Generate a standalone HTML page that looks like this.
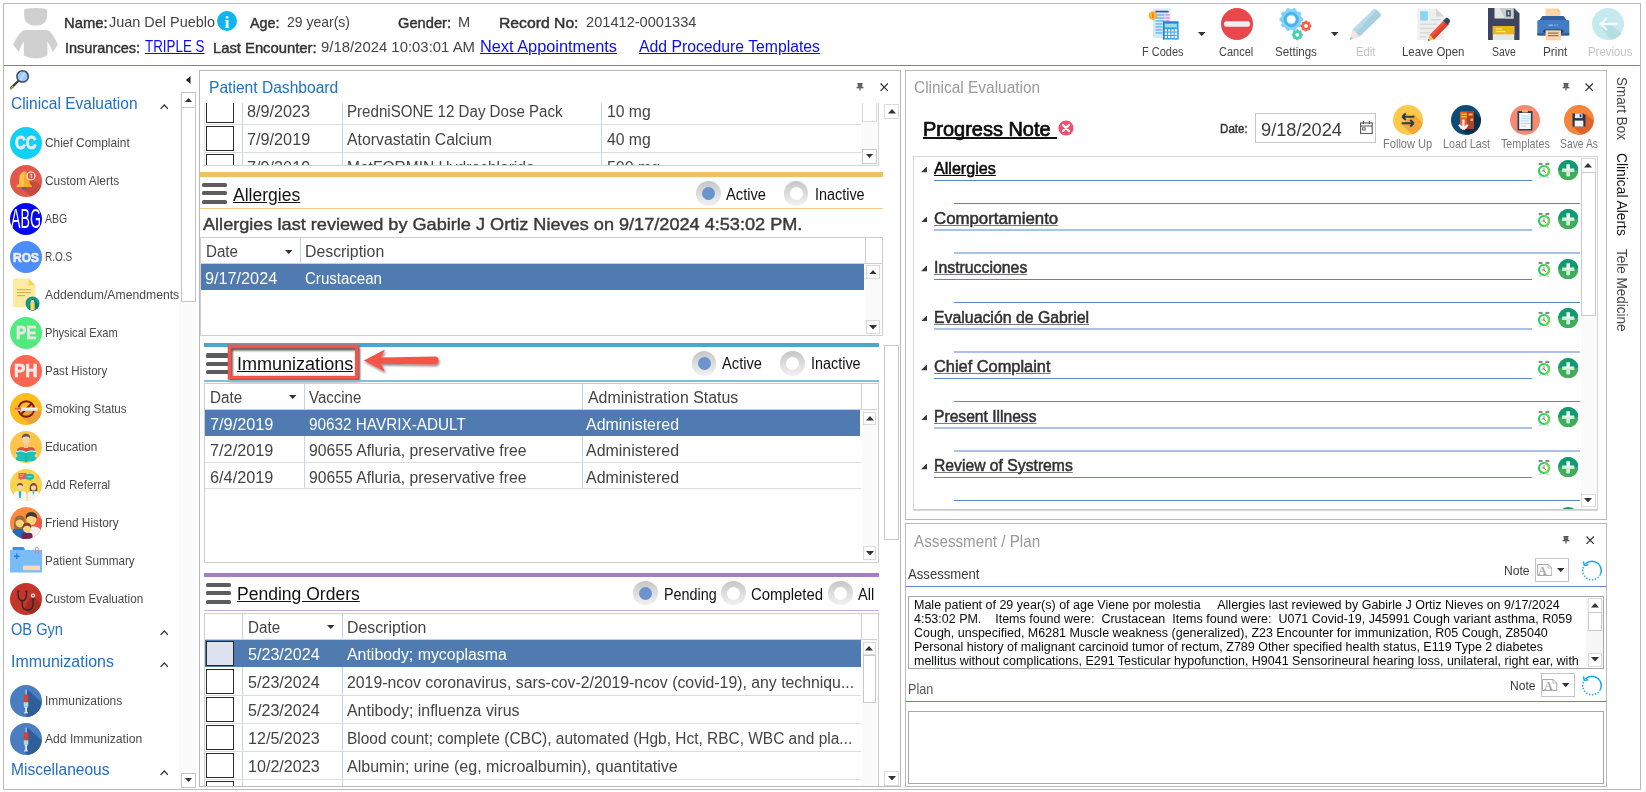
<!DOCTYPE html><html><head><meta charset="utf-8"><title>EHR</title><style>
html,body{margin:0;padding:0;background:#fff;}
body{width:1646px;height:792px;overflow:hidden;font-family:"Liberation Sans",sans-serif;}
#app{position:relative;width:1646px;height:792px;overflow:hidden;}
#app div,#app span.t,#app svg{position:absolute;}
span.t{white-space:pre;transform-origin:0 50%;display:block;}

</style></head><body><div id="app">
<div style="left:3px;top:3px;width:1636px;height:785px;border:1px solid #b9b9b9"></div>
<div style="left:4px;top:65px;width:1636px;height:1px;background:#5d8ac6"></div>
<svg style="left:12px;top:7px;" width="48" height="53" viewBox="12 7 48 53"><path d="M24.1 10.5Q24.1 8.7 27 8.4Q35.6 7.6 44.3 8.4Q47.2 8.7 47.2 10.5V14.5Q47.2 25.6 35.65 25.6Q24.1 25.6 24.1 14.5Z" fill="#d0d0d0"/><path d="M26 29.9H45.3Q49.5 29.9 52 34Q56 39.5 57.9 44.5L52.8 51.9Q50.5 45.5 47.4 41.5V55.5Q41 58.6 35.65 58.6Q30 58.6 23.8 55.5V41.5Q20.8 45.5 18.8 51.9L13.1 44.5Q15 39.5 19.3 34Q22 29.9 26 29.9Z" fill="#d0d0d0"/></svg>
<span class="t" style="left:63.5px;top:15.00px;font-size:15px;line-height:15px;color:#333;transform:scaleX(0.9844);-webkit-text-stroke:0.45px #333;">Name:</span>
<span class="t" style="left:108.5px;top:14.00px;font-size:15px;line-height:15px;color:#444;transform:scaleX(0.9630);">Juan Del Pueblo</span>
<div style="left:217px;top:11px;width:20px;height:20px;border-radius:50%;background:#12b4f0"></div>
<span class="t" style="left:224.6px;top:14.00px;font-size:17px;line-height:17px;color:#fff;font-weight:700;font-family:'Liberation Serif',sans-serif;">i</span>
<span class="t" style="left:249.5px;top:15.00px;font-size:15px;line-height:15px;color:#333;transform:scaleX(0.9559);-webkit-text-stroke:0.45px #333;">Age:</span>
<span class="t" style="left:287px;top:14.00px;font-size:15px;line-height:15px;color:#444;transform:scaleX(0.9329);">29 year(s)</span>
<span class="t" style="left:397.5px;top:15.00px;font-size:15px;line-height:15px;color:#333;transform:scaleX(0.9778);-webkit-text-stroke:0.45px #333;">Gender:</span>
<span class="t" style="left:458.3px;top:14.00px;font-size:15px;line-height:15px;color:#444;transform:scaleX(0.9760);">M</span>
<span class="t" style="left:498.5px;top:15.00px;font-size:15px;line-height:15px;color:#333;transform:scaleX(1.0478);-webkit-text-stroke:0.45px #333;">Record No:</span>
<span class="t" style="left:585.5px;top:14.00px;font-size:15px;line-height:15px;color:#444;transform:scaleX(0.9740);">201412-0001334</span>
<span class="t" style="left:65px;top:40.00px;font-size:15px;line-height:15px;color:#333;transform:scaleX(0.9672);-webkit-text-stroke:0.45px #333;">Insurances:</span>
<span class="t" style="left:144.5px;top:39.00px;font-size:16px;line-height:16px;color:#0a0aff;text-decoration:underline;transform:scaleX(0.8364);">TRIPLE S</span>
<span class="t" style="left:212.5px;top:40.00px;font-size:15px;line-height:15px;color:#333;transform:scaleX(0.9850);-webkit-text-stroke:0.45px #333;">Last Encounter:</span>
<span class="t" style="left:320.5px;top:39.00px;font-size:15px;line-height:15px;color:#444;transform:scaleX(0.9926);">9/18/2024 10:03:01 AM</span>
<span class="t" style="left:479.5px;top:39.00px;font-size:16px;line-height:16px;color:#0a0aff;text-decoration:underline;transform:scaleX(1.0201);">Next Appointments</span>
<span class="t" style="left:639px;top:39.00px;font-size:16px;line-height:16px;color:#0a0aff;text-decoration:underline;transform:scaleX(0.9847);">Add Procedure Templates</span>
<span class="t" style="left:1142.3px;top:46.00px;font-size:12px;line-height:12px;color:#444;transform:scaleX(0.9149);">F Codes</span>
<span class="t" style="left:1219px;top:46.00px;font-size:12px;line-height:12px;color:#444;transform:scaleX(0.9181);">Cancel</span>
<span class="t" style="left:1274.6px;top:46.00px;font-size:12px;line-height:12px;color:#444;transform:scaleX(0.9663);">Settings</span>
<span class="t" style="left:1355.5px;top:46.00px;font-size:12px;line-height:12px;color:#c4c4c4;transform:scaleX(0.9426);">Edit</span>
<span class="t" style="left:1402.2px;top:46.00px;font-size:12px;line-height:12px;color:#444;transform:scaleX(0.9543);">Leave Open</span>
<span class="t" style="left:1491.6px;top:46.00px;font-size:12px;line-height:12px;color:#444;transform:scaleX(0.8699);">Save</span>
<span class="t" style="left:1542.8px;top:46.00px;font-size:12px;line-height:12px;color:#444;transform:scaleX(0.9803);">Print</span>
<span class="t" style="left:1587.6px;top:46.00px;font-size:12px;line-height:12px;color:#c4c4c4;transform:scaleX(0.9510);">Previous</span>
<svg style="left:1197.55px;top:31.9px;" width="7.5" height="4.2" viewBox="0 0 7.5 4.2"><path d="M0 0H7.5L3.75 4.2Z" fill="#333"/></svg>
<svg style="left:1330.55px;top:31.9px;" width="7.5" height="4.2" viewBox="0 0 7.5 4.2"><path d="M0 0H7.5L3.75 4.2Z" fill="#333"/></svg>
<svg style="left:1148px;top:8px;" width="31" height="32" viewBox="0 0 31 32">
<path d="M5 0.5H22.5V30H7.5Q5 30 5 28Z" fill="#d6e8fb"/>
<rect x="7.5" y="2.8" width="13" height="1.6" fill="#33518f"/>
<g fill="#7ec0f5"><rect x="7.5" y="6" width="9" height="1.8"/><rect x="7.5" y="9" width="9" height="1.8"/><rect x="7.5" y="12" width="9" height="1.8"/><rect x="7.5" y="15" width="7" height="1.8"/><rect x="7.5" y="18" width="7" height="1.8"/><rect x="7.5" y="21" width="7" height="1.8"/><rect x="7.5" y="24" width="7" height="1.8"/></g>
<g fill="#f49ac0"><rect x="17.5" y="6" width="4" height="1.8"/><rect x="17.5" y="9" width="4" height="1.8"/><rect x="17.5" y="12" width="4" height="1.8"/></g>
<circle cx="5" cy="7.5" r="4.3" fill="#f7a823"/><circle cx="5" cy="7.5" r="3" fill="#fbbd3a"/><path d="M5.9 6.2Q4.2 5.6 4.2 6.9Q4.3 7.6 5.2 7.7Q6 7.9 5.9 8.6Q5.6 9.4 4.1 8.8M5 5.3V9.8" stroke="#e8641e" stroke-width=".7" fill="none"/>
<rect x="15" y="13.5" width="15.5" height="18" fill="#2b9cf0"/><rect x="15" y="13.5" width="1.3" height="18" fill="#1f82d6"/><rect x="15" y="13.5" width="15.5" height="1.4" fill="#1f82d6"/><rect x="26.2" y="20.5" width="4.3" height="11" fill="#45aaf5"/>
<rect x="16.8" y="15.8" width="12" height="3.6" fill="#9adfe0"/>
<g fill="#fff"><rect x="16.8" y="21.3" width="2.3" height="2.2"/><rect x="20.1" y="21.3" width="2.3" height="2.2"/><rect x="23.4" y="21.3" width="2.3" height="2.2"/><rect x="26.7" y="21.3" width="2.3" height="2.2"/>
<rect x="16.8" y="24.6" width="2.3" height="2.2"/><rect x="20.1" y="24.6" width="2.3" height="2.2"/><rect x="23.4" y="24.6" width="2.3" height="2.2"/><rect x="26.7" y="24.6" width="2.3" height="2.2"/>
<rect x="16.8" y="27.9" width="2.3" height="2.2"/><rect x="20.1" y="27.9" width="2.3" height="2.2"/><rect x="23.4" y="27.9" width="2.3" height="2.2"/><rect x="26.7" y="27.9" width="2.3" height="2.2"/></g>
</svg>
<svg style="left:1220.5px;top:8px;" width="32" height="32" viewBox="0 0 32 32"><circle cx="16" cy="16" r="16" fill="#e8474c"/><rect x="3" y="13.3" width="26" height="5.4" rx="2.5" fill="#f0f0f0"/></svg>
<svg style="left:1279px;top:8px;" width="33" height="33" viewBox="0 0 33 33"><path d="M23.44 10.37L23.44 12.63L21.68 13.56L21.08 15.41L21.96 17.19L20.63 19.03L18.66 18.74L17.09 19.88L16.75 21.84L14.60 22.54L13.17 21.15L11.23 21.15L9.80 22.54L7.65 21.84L7.31 19.88L5.74 18.74L3.77 19.03L2.44 17.19L3.32 15.41L2.72 13.56L0.96 12.63L0.96 10.37L2.72 9.44L3.32 7.59L2.44 5.81L3.77 3.97L5.74 4.26L7.31 3.12L7.65 1.16L9.80 0.46L11.23 1.85L13.17 1.85L14.60 0.46L16.75 1.16L17.09 3.12L18.66 4.26L20.63 3.97L21.96 5.81L21.08 7.59L21.68 9.44Z" fill="#7fd3fb" stroke="#7fd3fb" stroke-width="1" stroke-linejoin="round"/><circle cx="12.2" cy="11.5" r="4.1" fill="#fff"/><circle cx="12.2" cy="11.5" r="6.2" fill="none" stroke="#49b1ea" stroke-width="2.4"/><path d="M32.06 17.36L32.06 18.64L31.05 19.11L30.65 20.08L31.03 21.13L30.13 22.03L29.08 21.65L28.11 22.05L27.64 23.06L26.36 23.06L25.89 22.05L24.92 21.65L23.87 22.03L22.97 21.13L23.35 20.08L22.95 19.11L21.94 18.64L21.94 17.36L22.95 16.89L23.35 15.92L22.97 14.87L23.87 13.97L24.92 14.35L25.89 13.95L26.36 12.94L27.64 12.94L28.11 13.95L29.08 14.35L30.13 13.97L31.03 14.87L30.65 15.92L31.05 16.89Z" fill="#f8604e" stroke="#f8604e" stroke-width="1" stroke-linejoin="round"/><circle cx="27" cy="18" r="1.9" fill="#fff"/><path d="M23.36 26.16L23.36 27.44L22.35 27.91L21.95 28.88L22.33 29.93L21.43 30.83L20.38 30.45L19.41 30.85L18.94 31.86L17.66 31.86L17.19 30.85L16.22 30.45L15.17 30.83L14.27 29.93L14.65 28.88L14.25 27.91L13.24 27.44L13.24 26.16L14.25 25.69L14.65 24.72L14.27 23.67L15.17 22.77L16.22 23.15L17.19 22.75L17.66 21.74L18.94 21.74L19.41 22.75L20.38 23.15L21.43 22.77L22.33 23.67L21.95 24.72L22.35 25.69Z" fill="#45d0b0" stroke="#45d0b0" stroke-width="1" stroke-linejoin="round"/><circle cx="18.3" cy="26.8" r="1.9" fill="#fff"/></svg>
<svg style="left:1349px;top:8px;" width="33" height="33" viewBox="0 0 33 33">
<path d="M3.5 21.5L24 1.8Q25.8 0.2 27.6 1.8L31.2 5.4Q32.6 7 31 8.8L10.5 28.5Z" fill="#b9dcea"/>
<path d="M7 25L27.6 1.8L31.2 5.4Q32.6 7 31 8.8L10.5 28.5Z" fill="#a9d0e0"/>
<path d="M3.5 21.5L10.5 28.5L0.8 32Z" fill="#f3e4df"/><path d="M0.8 32L3.9 30.8L1.9 28.9Z" fill="#86c6de"/></svg>
<svg style="left:1417px;top:8px;" width="33" height="33" viewBox="0 0 33 33">
<path d="M0.5 0.5H19L27 8.5V32H0.5Z" fill="#efefef"/><path d="M19 0.5V8.5H27Z" fill="#d4d8de"/>
<rect x="3.2" y="3.2" width="7.6" height="9.3" fill="#86d6fb"/>
<g fill="#d5dae2"><rect x="14" y="11" width="10" height="1.6"/><rect x="3.2" y="15.4" width="17" height="1.6"/><rect x="3.2" y="19.6" width="14" height="1.6"/><rect x="3.2" y="23.8" width="10" height="1.6"/><rect x="3.2" y="28" width="6" height="1.6"/></g>
<path d="M12.5 27L27.5 11.5L32 16L17 31.5Z" fill="#f0533c"/><path d="M14.7 29.2L29.7 13.7L32 16L17 31.5Z" fill="#d9432f"/>
<path d="M26.2 12.8L29 10Q30 9 31 10L33 12.2Q33.8 13.2 32.8 14.2L30.5 17Z" fill="#2f4a5e"/>
<path d="M12.5 27L17 31.5L11 32.8Z" fill="#f6c243"/><path d="M11 32.8L12.9 32.4L11.5 31Z" fill="#333"/></svg>
<svg style="left:1488px;top:8px;" width="31.5" height="32" viewBox="0 0 31.5 32">
<path d="M0 0H26L31.5 5.5V32H0Z" fill="#3d4460"/>
<path d="M6.5 0H25.5V10.5H6.5Z" fill="#e3e7e7"/><path d="M11.5 0H25.5V10.5H17Z" fill="#c7cccc"/>
<rect x="18.2" y="2.2" width="4.6" height="6.3" fill="#3d4460"/><rect x="19.7" y="3.6" width="1.6" height="3.5" fill="#c7cccc"/>
<rect x="4.8" y="18" width="21.5" height="14" fill="#e4e7e7"/><rect x="4.8" y="18" width="21.5" height="8.3" fill="#e9b616"/>
<g fill="#fbe6a0"><rect x="7.8" y="20.3" width="6" height="1.3"/><rect x="7.8" y="22.9" width="9.5" height="1.3"/></g></svg>
<svg style="left:1537px;top:8px;" width="32.5" height="32.5" viewBox="0 0 32.5 32.5">
<path d="M8.5 0.5H20.5L23.5 3.5V11H8.5Z" fill="#fbd5a9"/><path d="M20.5 0.5V3.5H23.5Z" fill="#e8b684"/>
<path d="M5.5 8H26.5L29.5 12H2.5Z" fill="#2f5f9e"/>
<rect x="0.3" y="12" width="32" height="15.5" rx="1.5" fill="#437cc2"/><rect x="0.3" y="25" width="32" height="2.5" fill="#2f5f9e"/>
<g fill="#9fc4ee"><rect x="11.5" y="16.6" width="4.5" height="1.2"/><rect x="17.2" y="16.6" width="1.2" height="1.2"/><rect x="19.6" y="16.6" width="1.2" height="1.2"/></g>
<rect x="6.3" y="21.5" width="20" height="3.6" rx="1.8" fill="#23395b"/>
<rect x="8.5" y="22.3" width="15.5" height="10" fill="#fbd5a9"/>
<g fill="#7a5b3e"><rect x="11" y="24.6" width="10.5" height="1"/><rect x="11" y="27.2" width="10.5" height="1"/></g></svg>
<svg style="left:1592px;top:8px;" width="32" height="32" viewBox="0 0 32 32">
<circle cx="16" cy="16" r="16" fill="#c5e9ed"/>
<path d="M13 12L29.5 25.5A16 16 0 0 1 19 31.7L9 19.8Z" fill="#b6dde2"/>
<path d="M7 16L14 9.3L15.7 11L11.8 14.8H25.5V17.2H11.8L15.7 21L14 22.7Z" fill="#f1fafb"/></svg>
<svg style="left:8.5px;top:68.7px;" width="21" height="21" viewBox="0 0 21 21">
<path d="M2 19.2L9.2 12" stroke="#3d3d3d" stroke-width="2.4" stroke-linecap="round"/><path d="M1.6 19.6L3.6 17.6" stroke="#8aa04a" stroke-width="1.6" stroke-linecap="round"/>
<circle cx="13.6" cy="7.4" r="5.7" fill="#9ccafc" stroke="#3b4a5e" stroke-width="1.5"/>
<path d="M11.5 10.8L15.6 4" stroke="#cfe4fd" stroke-width="1.6"/></svg>
<svg style="left:186.3px;top:75.8px;" width="4.5" height="8" viewBox="0 0 4.5 8"><path d="M4.5 0V8L0 4Z" fill="#222"/></svg>
<span class="t" style="left:10.5px;top:96.00px;font-size:16px;line-height:16px;color:#2070c4;transform:scaleX(0.9676);">Clinical Evaluation</span>
<svg style="left:159.8px;top:103.5px;" width="8.6" height="5.4" viewBox="0 0 8.6 5.4"><path d="M0.6 4.9L4.3 1L8 4.9" stroke="#333" stroke-width="1.25" fill="none"/></svg>
<div style="left:178.5px;top:92px;width:17.5px;height:696px;background:#fbfbfb"></div>
<div style="left:181px;top:92.3px;width:12.6px;height:207.7px;border:1px solid #c4c4c4;background:#fff"></div>
<div style="left:181px;top:106.6px;width:14.6px;height:1px;background:#c9c9c9"></div>
<svg style="left:184.8px;top:98.0px;" width="7" height="4" viewBox="0 0 7 4"><path d="M0 4H7L3.5 0Z" fill="#333"/></svg>
<div style="left:181px;top:772.5px;width:12.6px;height:13.5px;border:1px solid #c4c4c4;background:#fff"></div>
<svg style="left:184.8px;top:778.0px;" width="7" height="4" viewBox="0 0 7 4"><path d="M0 0H7L3.5 4Z" fill="#333"/></svg>
<span class="t" style="left:45.3px;top:136.00px;font-size:13px;line-height:13px;color:#4a4a4a;transform:scaleX(0.9157);">Chief Complaint</span>
<span class="t" style="left:45.3px;top:174.00px;font-size:13px;line-height:13px;color:#4a4a4a;transform:scaleX(0.9169);">Custom Alerts</span>
<span class="t" style="left:45.3px;top:212.00px;font-size:13px;line-height:13px;color:#4a4a4a;transform:scaleX(0.8082);">ABG</span>
<span class="t" style="left:45.3px;top:250.00px;font-size:13px;line-height:13px;color:#4a4a4a;transform:scaleX(0.7682);">R.O.S</span>
<span class="t" style="left:45.3px;top:288.00px;font-size:13px;line-height:13px;color:#4a4a4a;transform:scaleX(0.9378);">Addendum/Amendments</span>
<span class="t" style="left:45.3px;top:326.00px;font-size:13px;line-height:13px;color:#4a4a4a;transform:scaleX(0.8528);">Physical Exam</span>
<span class="t" style="left:45.3px;top:364.00px;font-size:13px;line-height:13px;color:#4a4a4a;transform:scaleX(0.8876);">Past History</span>
<span class="t" style="left:45.3px;top:402.00px;font-size:13px;line-height:13px;color:#4a4a4a;transform:scaleX(0.8973);">Smoking Status</span>
<span class="t" style="left:45.3px;top:440.00px;font-size:13px;line-height:13px;color:#4a4a4a;transform:scaleX(0.9027);">Education</span>
<span class="t" style="left:45.3px;top:478.00px;font-size:13px;line-height:13px;color:#4a4a4a;transform:scaleX(0.8933);">Add Referral</span>
<span class="t" style="left:45.3px;top:516.00px;font-size:13px;line-height:13px;color:#4a4a4a;transform:scaleX(0.9108);">Friend History</span>
<span class="t" style="left:45.3px;top:554.00px;font-size:13px;line-height:13px;color:#4a4a4a;transform:scaleX(0.8997);">Patient Summary</span>
<span class="t" style="left:45.3px;top:592.00px;font-size:13px;line-height:13px;color:#4a4a4a;transform:scaleX(0.8999);">Custom Evaluation</span>
<span class="t" style="left:45.3px;top:694.00px;font-size:13px;line-height:13px;color:#4a4a4a;transform:scaleX(0.9211);">Immunizations</span>
<span class="t" style="left:45.3px;top:732.00px;font-size:13px;line-height:13px;color:#4a4a4a;transform:scaleX(0.9341);">Add Immunization</span>
<span class="t" style="left:10.5px;top:622.00px;font-size:16px;line-height:16px;color:#2070c4;transform:scaleX(0.9138);">OB Gyn</span>
<svg style="left:159.8px;top:629.5px;" width="8.6" height="5.4" viewBox="0 0 8.6 5.4"><path d="M0.6 4.9L4.3 1L8 4.9" stroke="#333" stroke-width="1.25" fill="none"/></svg>
<span class="t" style="left:10.5px;top:654.00px;font-size:16px;line-height:16px;color:#2070c4;transform:scaleX(0.9985);">Immunizations</span>
<svg style="left:159.8px;top:661.5px;" width="8.6" height="5.4" viewBox="0 0 8.6 5.4"><path d="M0.6 4.9L4.3 1L8 4.9" stroke="#333" stroke-width="1.25" fill="none"/></svg>
<span class="t" style="left:10.5px;top:762.00px;font-size:16px;line-height:16px;color:#2070c4;transform:scaleX(0.9715);">Miscellaneous</span>
<svg style="left:159.8px;top:769.5px;" width="8.6" height="5.4" viewBox="0 0 8.6 5.4"><path d="M0.6 4.9L4.3 1L8 4.9" stroke="#333" stroke-width="1.25" fill="none"/></svg>
<div style="left:10px;top:126.6px;width:32px;height:32px;border-radius:50%;background:#0fd0f5"></div>
<span class="t" style="left:15.2px;top:134.00px;font-size:18.5px;line-height:18.5px;color:#e9e9e9;font-weight:700;transform:scaleX(0.8079);-webkit-text-stroke:0.9px #e9e9e9;">CC</span>
<svg style="left:10px;top:164.6px;" width="32" height="32" viewBox="0 0 32 32">
<circle cx="16" cy="16" r="16" fill="#e2574c"/>
<path d="M11 8L31.3 20.5A16 16 0 0 1 20.5 31.4L8 19Z" fill="#c94a40"/>
<path d="M14.2 6.2Q9.6 7.6 9.4 13L9 18.5L6.5 21.2V22H21.9V21.2L19.4 18.5L19 13Q18.8 7.6 14.2 6.2Z" fill="#fbc34a"/>
<path d="M14.2 6.2Q18.8 7.6 19 13L19.4 18.5L21.9 21.2V22H14.2Z" fill="#f0ad2e"/>
<path d="M11.7 22.5H16.7Q16.5 25 14.2 25Q11.9 25 11.7 22.5Z" fill="#4a6a8c"/>
<circle cx="21" cy="11" r="4" fill="#e2574c" stroke="#fdeeee" stroke-width="1.1"/><path d="M20.5 9.6L21.3 9V13" stroke="#fdeeee" stroke-width="0.9" fill="none"/></svg>
<div style="left:10px;top:202.6px;width:32px;height:32px;border-radius:50%;background:#0505f0;overflow:hidden"></div>
<span class="t" style="left:11.2px;top:206.00px;font-size:27px;line-height:27px;color:#fff;transform:scaleX(0.5260);">ABG</span>
<div style="left:10px;top:240.60000000000002px;width:32px;height:32px;border-radius:50%;background:#4d8dfa"></div>
<span class="t" style="left:13.0px;top:251.00px;font-size:13.5px;line-height:13.5px;color:#ececec;font-weight:700;transform:scaleX(0.8884);-webkit-text-stroke:0.7px #ececec;">ROS</span>
<svg style="left:12px;top:278.1px;" width="29" height="34" viewBox="0 0 29 34">
<path d="M1 0.5H16.5L23.5 7.5V29H1Z" fill="#feeaa0"/><path d="M16.5 0.5V7.5H23.5Z" fill="#f9d45c"/>
<g fill="#d9b448"><rect x="5" y="11" width="14" height="1.2"/><rect x="5" y="14" width="14" height="1.2"/><rect x="5" y="17" width="8" height="1.2"/></g>
<circle cx="20.5" cy="25.5" r="7" fill="#11998c"/><path d="M16 30.8A7 7 0 0 0 27.3 27.2L22 21Z" fill="#0c7f75"/>
<path d="M18.4 24.5H22.6V31.6Q20.5 32.6 18.4 31.6Z" fill="#fbd75a"/><path d="M18.4 24.5L20.5 20.3L22.6 24.5Z" fill="#fbe9c8"/><path d="M19.7 21.9L20.5 20.3L21.3 21.9Z" fill="#333"/></svg>
<div style="left:10px;top:316.6px;width:32px;height:32px;border-radius:50%;background:#4fec7d"></div>
<span class="t" style="left:15.75px;top:324.00px;font-size:18px;line-height:18px;color:#e6e6e6;font-weight:700;transform:scaleX(0.8536);-webkit-text-stroke:0.7px #e6e6e6;">PE</span>
<div style="left:10px;top:354.6px;width:32px;height:32px;border-radius:50%;background:#fa6650"></div>
<span class="t" style="left:14.25px;top:362.00px;font-size:18px;line-height:18px;color:#ececec;font-weight:700;transform:scaleX(0.9394);-webkit-text-stroke:0.7px #ececec;">PH</span>
<svg style="left:10px;top:392.6px;" width="32" height="32" viewBox="0 0 32 32">
<circle cx="16" cy="16" r="16" fill="#fcbe1c"/>
<path d="M11 23L22.5 12.5L31.6 19.5A16 16 0 0 1 19.3 31.6Z" fill="#e6a43a"/>
<circle cx="16.3" cy="16" r="7.8" fill="none" stroke="#8e1313" stroke-width="1.9"/>
<path d="M10.8 21.5L21.8 10.5" stroke="#8e1313" stroke-width="1.9"/>
<rect x="4.5" y="14.5" width="23" height="3.2" rx="0.6" fill="#f3f3f3"/><rect x="4.5" y="14.5" width="6.8" height="3.2" rx="0.6" fill="#e8642c"/><rect x="4.5" y="16.5" width="23" height="1.2" fill="#d9d9d9" opacity=".7"/></svg>
<svg style="left:10px;top:430.6px;" width="32" height="32" viewBox="0 0 32 32">
<defs><clipPath id="ce"><circle cx="16" cy="16" r="16"/></clipPath></defs>
<circle cx="16" cy="16" r="16" fill="#fcc44a"/>
<g clip-path="url(#ce)">
<path d="M7 19.5Q7 16.5 11 16.2L21 16.2Q25 16.5 25 19.5V26H7Z" fill="#e8493f"/>
<rect x="14" y="11.5" width="4" height="5.5" fill="#f9c495"/>
<ellipse cx="16" cy="8.3" rx="4" ry="4.7" fill="#fbd0a4"/>
<path d="M11.8 7.6Q11.6 2.8 16 2.7Q20.4 2.8 20.2 7.6Q19.3 5.3 16 5.4Q12.7 5.3 11.8 7.6Z" fill="#5b5b5b"/>
<path d="M6 20.3Q11 18 16 20.5Q21 18 26 20.3V30.8Q21 29 16 31Q11 29 6 30.8Z" fill="#1fc2b0"/>
<path d="M16 20.5V31" stroke="#15a596" stroke-width="0.8"/><path d="M6 20.3Q11 18.6 16 21Q21 18.6 26 20.3V21.2Q21 19.4 16 21.9Q11 19.4 6 21.2Z" fill="#f3f3f3"/>
<rect x="5.2" y="23.3" width="2.2" height="2.8" rx="1" fill="#fbd0a4"/><rect x="24.6" y="23.3" width="2.2" height="2.8" rx="1" fill="#fbd0a4"/></g></svg>
<svg style="left:10px;top:468.6px;" width="32" height="32" viewBox="0 0 32 32">
<defs><clipPath id="cr"><circle cx="16" cy="16" r="16"/></clipPath></defs>
<circle cx="16" cy="16" r="16" fill="#fbd24e"/>
<g clip-path="url(#cr)">
<path d="M8.5 4H16.5V10H12L10.3 11.8V10H8.5Z" fill="#f2564f"/><rect x="9.7" y="5.4" width="4.2" height="0.9" fill="#fa9c96"/><rect x="9.7" y="7.2" width="3" height="0.9" fill="#fa9c96"/>
<path d="M15 7.8Q15 4.8 19.5 4.8Q24 4.8 24 7.8Q24 10.8 20.5 10.8L21.5 12.5L18.8 10.8Q15 10.6 15 7.8Z" fill="#20b8b0"/><rect x="17.3" y="7" width="4.5" height="1.2" rx=".6" fill="#7fe0da"/>
<path d="M3.5 27Q3.5 22.5 7 22.3H13Q16.5 22.5 16.5 27V32H3.5Z" fill="#f4f6f8"/><path d="M8.7 22.3H11.3L10.8 29H9.2Z" fill="#1fb5a6"/>
<ellipse cx="10" cy="18" rx="3" ry="3.5" fill="#fbd0a4"/><path d="M6.9 17.6Q6.8 14 10 14Q13.2 14 13.1 17.6Q12.3 15.8 10 15.9Q7.7 15.8 6.9 17.6Z" fill="#6a5a4a"/>
<path d="M17.5 27Q17.5 22.8 20.5 22.5H26.5Q29.5 22.8 29.5 27V32H17.5Z" fill="#f4f6f8"/><path d="M22.4 22.5H24.6L23.5 26Z" fill="#1fb5a6"/>
<path d="M19.8 22Q19 14 23.5 14Q28 14 27.2 22Z" fill="#6b4a3a"/><ellipse cx="23.5" cy="18.3" rx="2.6" ry="3.2" fill="#fbd0a4"/><path d="M20.8 18Q20.8 14.8 23.5 14.8Q26.2 14.8 26.2 18Q25 16 23.5 16.2Q22 16 20.8 18Z" fill="#6b4a3a"/></g></svg>
<svg style="left:10px;top:506.6px;" width="32" height="32" viewBox="0 0 32 32">
<defs><clipPath id="cf"><circle cx="16" cy="16" r="16"/></clipPath></defs>
<circle cx="16" cy="16" r="16" fill="#fc8a3c"/>
<g clip-path="url(#cf)">
<path d="M20 6L32 12V26L22 32H14Z" fill="#f0594a"/>
<path d="M16 23Q16 19.5 19.5 19.5H24.5Q31 20 31.5 26V32H16Z" fill="#f1f1f1"/>
<ellipse cx="21.5" cy="12.3" rx="5" ry="5.8" fill="#fcd27a"/><path d="M15.8 12.5Q14.5 5 21.5 5Q27.5 5 27 11.5Q24 8.3 19 9.2Q17 9.5 15.8 12.5Z" fill="#3a3a3a"/>
<path d="M2.5 26Q2.5 21.5 6.5 21.3H12.5Q16 21.5 16 26V32H2.5Z" fill="#1b6fb6"/>
<path d="M4.5 22Q2.5 8.5 10 8.5Q17 8.5 15 22Z" fill="#9a6a3a"/><ellipse cx="9.8" cy="15.5" rx="4.3" ry="5" fill="#fcd27a"/><path d="M5.3 15.5Q5 10.2 10 10.2Q14.6 10.2 14.3 15.5Q12 12.4 9.8 12.6Q7 12.6 5.3 15.5Z" fill="#9a6a3a"/>
<path d="M11.5 29Q11.5 25.8 14.5 25.8H19.5Q22.5 25.8 22.5 29V32H11.5Z" fill="#7a2352"/>
<ellipse cx="17" cy="21.3" rx="3.9" ry="4.3" fill="#fcd77f"/><path d="M12.8 21.5Q12.2 15.8 17 15.8Q21.8 15.8 21.2 21.5Q20 18.7 17 18.8Q14 18.7 12.8 21.5Z" fill="#7a4526"/></g></svg>
<svg style="left:10px;top:547.1px;" width="32.5" height="26" viewBox="0 0 32.5 26">
<path d="M2.5 1Q2.5 0 3.5 0H13Q14 0 14.3 1L15 3.5H2.5Z" fill="#3f8fe0"/>
<rect x="0" y="3" width="32" height="22.5" fill="#79bcfa"/>
<path d="M4 9.2H9.5M6.75 6.5V12" stroke="#2b7fd6" stroke-width="1.5"/>
<rect x="13" y="18.6" width="17" height="4.6" fill="#fbd9b0"/>
<path d="M25.5 6.5V1.8Q25.5 0.4 26.9 0.4Q28.3 0.4 28.3 1.8V7.3" stroke="#f0707a" stroke-width="0.9" fill="none"/></svg>
<svg style="left:10px;top:582.6px;" width="32" height="32" viewBox="0 0 32 32">
<circle cx="16" cy="16" r="16" fill="#c6352b"/>
<path d="M22 11.5L31.2 21A16 16 0 0 1 21 31.2L14 26Z" fill="#a52a22"/>
<path d="M9.3 8.3H8Q7.6 17.5 12.3 18Q17 17.5 16.6 8.3H15.3" stroke="#2a2a2a" stroke-width="1.4" fill="none"/>
<path d="M12.3 18V22Q12.5 27 17.5 27Q22.8 27 23 21V14.5" stroke="#2a2a2a" stroke-width="1.4" fill="none"/>
<circle cx="23" cy="12.6" r="2.2" fill="#e9e9e9"/><circle cx="23" cy="12.6" r="0.9" fill="#c6352b"/></svg>
<svg style="left:10px;top:684.6px;" width="32" height="32" viewBox="0 0 32 32">
<circle cx="16" cy="16" r="16" fill="#4a7ec2"/>
<path d="M17.5 4.5L31.8 17.5A16 16 0 0 1 17 31.9L15 28Z" fill="#2f5e98"/>
<rect x="15.6" y="4.6" width="0.9" height="5" fill="#dfe7ef"/>
<rect x="13.8" y="9.5" width="4.5" height="8" fill="#d2452c"/>
<rect x="13.8" y="17.3" width="4.5" height="4.4" fill="#a8e0df"/>
<path d="M14.4 21.7H17.7L17.2 23H14.9Z" fill="#e9eff3"/><rect x="15.2" y="23" width="1.7" height="4.6" fill="#f2f5f7"/><rect x="14.2" y="27.3" width="3.7" height="1.1" fill="#f2f5f7"/></svg>
<svg style="left:10px;top:722.6px;" width="32" height="32" viewBox="0 0 32 32">
<circle cx="16" cy="16" r="16" fill="#4a7ec2"/>
<path d="M17.5 4.5L31.8 17.5A16 16 0 0 1 17 31.9L15 28Z" fill="#2f5e98"/>
<rect x="15.6" y="4.6" width="0.9" height="5" fill="#dfe7ef"/>
<rect x="13.8" y="9.5" width="4.5" height="8" fill="#d2452c"/>
<rect x="13.8" y="17.3" width="4.5" height="4.4" fill="#a8e0df"/>
<path d="M14.4 21.7H17.7L17.2 23H14.9Z" fill="#e9eff3"/><rect x="15.2" y="23" width="1.7" height="4.6" fill="#f2f5f7"/><rect x="14.2" y="27.3" width="3.7" height="1.1" fill="#f2f5f7"/></svg>
<div style="left:199px;top:70px;width:700.3px;height:715px;border:1px solid #b9b9b9;background:#fff"></div>
<span class="t" style="left:208.5px;top:80.00px;font-size:16px;line-height:16px;color:#2072c4;transform:scaleX(0.9749);">Patient Dashboard</span>
<svg style="left:856.3px;top:83px;" width="8" height="9" viewBox="0 0 8 9"><path d="M1.5 0.5H6.5M2.3 0.5V4.2M5.7 0.5V4.2M0.5 4.7H7.5M4 4.7V7.6" stroke="#444" stroke-width="1.1" fill="none"/><rect x="2.3" y="0.5" width="3.4" height="4" fill="#666"/></svg>
<svg style="left:880px;top:82.7px;" width="8.4" height="8.4" viewBox="0 0 8.4 8.4"><path d="M0.5 0.5L7.9 7.9M7.9 0.5L0.5 7.9" stroke="#333" stroke-width="1.2"/></svg>
<div style="left:200px;top:103px;width:680px;height:62px;overflow:hidden">
<div style="left:5px;top:21.200000000000003px;width:656px;height:1px;background:#dcdcdc"></div>
<div style="left:5.800000000000011px;top:-5.0px;width:25.8px;height:22.8px;border:1px solid #2a2a2a;background:#fff"></div>
<span class="t" style="left:47.30000000000001px;top:1.00px;font-size:16px;line-height:16px;color:#444;transform:scaleX(1.0131);">8/9/2023</span>
<span class="t" style="left:147.39999999999998px;top:1.00px;font-size:16px;line-height:16px;color:#444;transform:scaleX(0.9434);">PredniSONE 12 Day Dose Pack</span>
<span class="t" style="left:406.79999999999995px;top:1.00px;font-size:16px;line-height:16px;color:#444;transform:scaleX(0.9827);">10 mg</span>
<div style="left:5px;top:49.349999999999994px;width:656px;height:1px;background:#dcdcdc"></div>
<div style="left:5.800000000000011px;top:23.14999999999999px;width:25.8px;height:22.8px;border:1px solid #2a2a2a;background:#fff"></div>
<span class="t" style="left:47.30000000000001px;top:29.00px;font-size:16px;line-height:16px;color:#444;transform:scaleX(1.0148);">7/9/2019</span>
<span class="t" style="left:147.39999999999998px;top:29.00px;font-size:16px;line-height:16px;color:#444;transform:scaleX(0.9876);">Atorvastatin Calcium</span>
<span class="t" style="left:406.79999999999995px;top:29.00px;font-size:16px;line-height:16px;color:#444;transform:scaleX(0.9827);">40 mg</span>
<div style="left:5px;top:77.5px;width:656px;height:1px;background:#dcdcdc"></div>
<div style="left:5.800000000000011px;top:51.30000000000001px;width:25.8px;height:22.8px;border:1px solid #2a2a2a;background:#fff"></div>
<span class="t" style="left:47.30000000000001px;top:57.00px;font-size:16px;line-height:16px;color:#444;transform:scaleX(1.0148);">7/9/2019</span>
<span class="t" style="left:147.39999999999998px;top:57.00px;font-size:16px;line-height:16px;color:#444;transform:scaleX(0.9723);">MetFORMIN Hydrochloride</span>
<span class="t" style="left:406.79999999999995px;top:57.00px;font-size:16px;line-height:16px;color:#444;transform:scaleX(0.9967);">500 mg</span>
<div style="left:42px;top:0px;width:1px;height:62px;background:#c9d3e3"></div>
<div style="left:142px;top:0px;width:1px;height:62px;background:#c9d3e3"></div>
<div style="left:401px;top:0px;width:1px;height:62px;background:#c9d3e3"></div>
<div style="left:661px;top:0px;width:17px;height:62px;background:#fbfbfb"></div>
<div style="left:661.5px;top:-2px;width:13px;height:18.6px;border:1px solid #dadada;background:#fff"></div>
<div style="left:661.5px;top:45.69999999999999px;width:13px;height:13px;border:1px solid #c9c9c9;background:#fff"></div>
<svg style="left:665.5px;top:50.80000000000001px;" width="7" height="4" viewBox="0 0 7 4"><path d="M0 0H7L3.5 4Z" fill="#333"/></svg>
</div>
<div style="left:877.5px;top:103px;width:1.2px;height:62.5px;background:#d9d9d9"></div>
<div style="left:204px;top:164.6px;width:675px;height:1.3px;background:#d4d4d4"></div>
<div style="left:204.3px;top:103px;width:1px;height:62px;background:#e3e3e3"></div>
<div style="left:884.4px;top:104.3px;width:12.3px;height:12.3px;border:1px solid #dadada;background:#fff"></div>
<svg style="left:887.55px;top:109.2px;" width="8" height="4.5" viewBox="0 0 8 4.5"><path d="M0 4.5H8L4.0 0Z" fill="#333"/></svg>
<div style="left:884.4px;top:344.7px;width:12.3px;height:193px;border:1px solid #c9c9c9;background:#fff"></div>
<div style="left:884.4px;top:770.5px;width:12.3px;height:13px;border:1px solid #dadada;background:#fff"></div>
<svg style="left:887.55px;top:775.75px;" width="8" height="4.5" viewBox="0 0 8 4.5"><path d="M0 0H8L4.0 4.5Z" fill="#333"/></svg>
<div style="left:200px;top:172px;width:682.8px;height:5px;background:#efc15f"></div>
<div style="left:201.6px;top:182.8px;width:25.2px;height:4.2px;background:#5c5c5c;border-radius:1.6px"></div>
<div style="left:201.6px;top:191.20000000000002px;width:25.2px;height:4.2px;background:#5c5c5c;border-radius:1.6px"></div>
<div style="left:201.6px;top:199.60000000000002px;width:25.2px;height:4.2px;background:#5c5c5c;border-radius:1.6px"></div>
<span class="t" style="left:233.2px;top:186.00px;font-size:18px;line-height:18px;color:#111;text-decoration:underline;transform:scaleX(0.9749);">Allergies</span>
<div style="left:696.05px;top:181.05px;width:24.5px;height:24.5px;border-radius:50%;background:linear-gradient(#c6c6c6,#f2f2f2)"></div>
<div style="left:701.8px;top:186.8px;width:13px;height:13px;border-radius:50%;background:#6b93cc"></div>
<span class="t" style="left:725.8px;top:187.00px;font-size:16px;line-height:16px;color:#111;transform:scaleX(0.9179);">Active</span>
<div style="left:783.75px;top:181.05px;width:24.5px;height:24.5px;border-radius:50%;background:linear-gradient(#c6c6c6,#f2f2f2)"></div>
<div style="left:789.5px;top:186.8px;width:13px;height:13px;border-radius:50%;background:#fff"></div>
<span class="t" style="left:814.6px;top:187.00px;font-size:16px;line-height:16px;color:#111;transform:scaleX(0.8995);">Inactive</span>
<div style="left:200px;top:207.8px;width:682.8px;height:1.2px;background:#f3cf85"></div>
<span class="t" style="left:202.6px;top:216.00px;font-size:17px;line-height:17px;color:#3a3a3a;transform:scaleX(1.0661);-webkit-text-stroke:0.42px #3a3a3a;">Allergies last reviewed by Gabirle J Ortiz Nieves on 9/17/2024 4:53:02 PM.</span>
<div style="left:200px;top:237px;width:680.6px;height:97.4px;border:1px solid #cfcfcf;background:#fff"></div>
<span class="t" style="left:205.8px;top:244.00px;font-size:16px;line-height:16px;color:#444;transform:scaleX(0.9468);">Date</span>
<svg style="left:285.25px;top:249.5px;" width="7.5" height="4" viewBox="0 0 7.5 4"><path d="M0 0H7.5L3.75 4Z" fill="#333"/></svg>
<div style="left:300.3px;top:238px;width:1px;height:25.5px;background:#c9d3e3"></div>
<span class="t" style="left:305.4px;top:244.00px;font-size:16px;line-height:16px;color:#444;transform:scaleX(0.9896);">Description</span>
<div style="left:865px;top:238px;width:1px;height:25.5px;background:#d0d0d0"></div>
<div style="left:201px;top:263px;width:680.6px;height:1px;background:#cfcfcf"></div>
<div style="left:201px;top:264px;width:663.3px;height:25.7px;background:#507bb0"></div>
<span class="t" style="left:205.2px;top:271.00px;font-size:16px;line-height:16px;color:#fff;transform:scaleX(1.0142);">9/17/2024</span>
<span class="t" style="left:305.4px;top:271.00px;font-size:16px;line-height:16px;color:#fff;transform:scaleX(0.9410);">Crustacean</span>
<div style="left:865.5px;top:264px;width:16px;height:70.4px;background:#fbfbfb"></div>
<div style="left:866.4px;top:265px;width:11.6px;height:12px;border:1px solid #dadada;background:#fff"></div>
<svg style="left:869.1999999999999px;top:269.75px;" width="8" height="4.5" viewBox="0 0 8 4.5"><path d="M0 4.5H8L4.0 0Z" fill="#333"/></svg>
<div style="left:866.4px;top:320px;width:11.6px;height:11.6px;border:1px solid #dadada;background:#fff"></div>
<svg style="left:869.1999999999999px;top:324.55px;" width="8" height="4.5" viewBox="0 0 8 4.5"><path d="M0 0H8L4.0 4.5Z" fill="#333"/></svg>
<div style="left:204.3px;top:343.2px;width:674.7px;height:3.8px;background:#4ea5c8"></div>
<div style="left:205.9px;top:353.4px;width:25.2px;height:4.2px;background:#5c5c5c;border-radius:1.6px"></div>
<div style="left:205.9px;top:361.79999999999995px;width:25.2px;height:4.2px;background:#5c5c5c;border-radius:1.6px"></div>
<div style="left:205.9px;top:370.2px;width:25.2px;height:4.2px;background:#5c5c5c;border-radius:1.6px"></div>
<span class="t" style="left:237.3px;top:355.00px;font-size:18px;line-height:18px;color:#111;text-decoration:underline;transform:scaleX(1.0013);">Immunizations</span>
<svg style="left:222px;top:340px;" width="145" height="46" viewBox="0 0 145 46"><defs><filter id="bs" x="-10%" y="-20%" width="120%" height="150%"><feGaussianBlur stdDeviation="0.9"/></filter></defs>
<rect x="8.9" y="8.6" width="127.2" height="31.2" fill="none" stroke="#1a1a1a" stroke-width="3.6" opacity=".8" filter="url(#bs)"/>
<rect x="7.6" y="6.4" width="127.2" height="31.2" fill="none" stroke="#f4554a" stroke-width="3.7"/></svg>
<svg style="left:360px;top:344px;" width="86" height="36" viewBox="0 0 86 36"><defs><filter id="sh" x="-10%" y="-20%" width="125%" height="160%"><feDropShadow dx="1" dy="1.8" stdDeviation="1" flood-color="#000" flood-opacity=".45"/></filter></defs>
<path filter="url(#sh)" d="M3.8 16.5L24 6.1Q24.9 5.7 24.6 6.7L21 13.4L75 12.6Q78.6 12.8 78.6 16.5Q78.6 20.2 75 20.4L21 19.8L24.6 26.6Q24.9 27.6 24 27.2Z" fill="#f4554a"/></svg>
<div style="left:691.85px;top:351.05px;width:24.5px;height:24.5px;border-radius:50%;background:linear-gradient(#c6c6c6,#f2f2f2)"></div>
<div style="left:697.6px;top:356.8px;width:13px;height:13px;border-radius:50%;background:#6b93cc"></div>
<span class="t" style="left:722px;top:356.00px;font-size:16px;line-height:16px;color:#111;transform:scaleX(0.9179);">Active</span>
<div style="left:780.25px;top:351.05px;width:24.5px;height:24.5px;border-radius:50%;background:linear-gradient(#c6c6c6,#f2f2f2)"></div>
<div style="left:786.0px;top:356.8px;width:13px;height:13px;border-radius:50%;background:#fff"></div>
<span class="t" style="left:810.7px;top:356.00px;font-size:16px;line-height:16px;color:#111;transform:scaleX(0.8995);">Inactive</span>
<div style="left:204.3px;top:380.4px;width:674.7px;height:1.2px;background:#7fbfdc"></div>
<div style="left:204.3px;top:382.6px;width:673.2px;height:178.3px;border:1px solid #cfcfcf;background:#fff"></div>
<span class="t" style="left:209.6px;top:390.00px;font-size:16px;line-height:16px;color:#444;transform:scaleX(0.9528);">Date</span>
<svg style="left:289.25px;top:395.0px;" width="7.5" height="4" viewBox="0 0 7.5 4"><path d="M0 0H7.5L3.75 4Z" fill="#333"/></svg>
<div style="left:304.3px;top:383.6px;width:1px;height:25.4px;background:#c9d3e3"></div>
<span class="t" style="left:309.3px;top:390.00px;font-size:16px;line-height:16px;color:#444;transform:scaleX(0.9384);">Vaccine</span>
<div style="left:582px;top:383.6px;width:1px;height:25.4px;background:#c9d3e3"></div>
<span class="t" style="left:587.6px;top:390.00px;font-size:16px;line-height:16px;color:#444;transform:scaleX(0.9935);">Administration Status</span>
<div style="left:861px;top:383.6px;width:1px;height:25.4px;background:#d0d0d0"></div>
<div style="left:205.3px;top:409px;width:672.2px;height:1px;background:#cfcfcf"></div>
<div style="left:205.3px;top:410px;width:655.0px;height:25.6px;background:#507bb0"></div>
<span class="t" style="left:209.6px;top:417.00px;font-size:16px;line-height:16px;color:#fff;transform:scaleX(1.0180);">7/9/2019</span>
<span class="t" style="left:309.3px;top:417.00px;font-size:16px;line-height:16px;color:#fff;transform:scaleX(0.9566);">90632 HAVRIX-ADULT</span>
<span class="t" style="left:585.8px;top:417.00px;font-size:16px;line-height:16px;color:#fff;transform:scaleX(0.9960);">Administered</span>
<span class="t" style="left:209.6px;top:443.00px;font-size:16px;line-height:16px;color:#444;transform:scaleX(1.0180);">7/2/2019</span>
<span class="t" style="left:309.3px;top:443.00px;font-size:16px;line-height:16px;color:#444;transform:scaleX(0.9816);">90655 Afluria, preservative free</span>
<span class="t" style="left:585.8px;top:443.00px;font-size:16px;line-height:16px;color:#444;transform:scaleX(0.9960);">Administered</span>
<div style="left:205.3px;top:462.0px;width:655.7px;height:1px;background:#dcdcdc"></div>
<div style="left:304.3px;top:436.0px;width:1px;height:26.0px;background:#c9d3e3"></div>
<div style="left:582px;top:436.0px;width:1px;height:26.0px;background:#c9d3e3"></div>
<span class="t" style="left:209.6px;top:470.00px;font-size:16px;line-height:16px;color:#444;transform:scaleX(1.0180);">6/4/2019</span>
<span class="t" style="left:309.3px;top:470.00px;font-size:16px;line-height:16px;color:#444;transform:scaleX(0.9816);">90655 Afluria, preservative free</span>
<span class="t" style="left:585.8px;top:470.00px;font-size:16px;line-height:16px;color:#444;transform:scaleX(0.9960);">Administered</span>
<div style="left:205.3px;top:488.40000000000003px;width:655.7px;height:1px;background:#dcdcdc"></div>
<div style="left:304.3px;top:462.4px;width:1px;height:26.0px;background:#c9d3e3"></div>
<div style="left:582px;top:462.4px;width:1px;height:26.0px;background:#c9d3e3"></div>
<div style="left:861.5px;top:410px;width:16px;height:150.5px;background:#fbfbfb"></div>
<div style="left:862.7px;top:411.5px;width:11.6px;height:11.6px;border:1px solid #dadada;background:#fff"></div>
<svg style="left:865.5px;top:416.05px;" width="8" height="4.5" viewBox="0 0 8 4.5"><path d="M0 4.5H8L4.0 0Z" fill="#333"/></svg>
<div style="left:862.7px;top:546px;width:11.6px;height:11.8px;border:1px solid #dadada;background:#fff"></div>
<svg style="left:865.5px;top:550.65px;" width="8" height="4.5" viewBox="0 0 8 4.5"><path d="M0 0H8L4.0 4.5Z" fill="#333"/></svg>
<div style="left:204.3px;top:572.8px;width:674.7px;height:3.9px;background:#a67cc9"></div>
<div style="left:205.9px;top:582.8px;width:25.2px;height:4.2px;background:#5c5c5c;border-radius:1.6px"></div>
<div style="left:205.9px;top:591.1999999999999px;width:25.2px;height:4.2px;background:#5c5c5c;border-radius:1.6px"></div>
<div style="left:205.9px;top:599.5999999999999px;width:25.2px;height:4.2px;background:#5c5c5c;border-radius:1.6px"></div>
<span class="t" style="left:237.2px;top:585.00px;font-size:18px;line-height:18px;color:#111;text-decoration:underline;transform:scaleX(0.9740);">Pending Orders</span>
<div style="left:633.25px;top:580.75px;width:24.5px;height:24.5px;border-radius:50%;background:linear-gradient(#c6c6c6,#f2f2f2)"></div>
<div style="left:639.0px;top:586.5px;width:13px;height:13px;border-radius:50%;background:#6b93cc"></div>
<span class="t" style="left:663.5px;top:587.00px;font-size:16px;line-height:16px;color:#111;transform:scaleX(0.8975);">Pending</span>
<div style="left:721.15px;top:580.75px;width:24.5px;height:24.5px;border-radius:50%;background:linear-gradient(#c6c6c6,#f2f2f2)"></div>
<div style="left:726.9px;top:586.5px;width:13px;height:13px;border-radius:50%;background:#fff"></div>
<span class="t" style="left:751.2px;top:587.00px;font-size:16px;line-height:16px;color:#111;transform:scaleX(0.9318);">Completed</span>
<div style="left:828.35px;top:580.75px;width:24.5px;height:24.5px;border-radius:50%;background:linear-gradient(#c6c6c6,#f2f2f2)"></div>
<div style="left:834.1px;top:586.5px;width:13px;height:13px;border-radius:50%;background:#fff"></div>
<span class="t" style="left:858.3px;top:587.00px;font-size:16px;line-height:16px;color:#111;transform:scaleX(0.9111);">All</span>
<div style="left:204.3px;top:610px;width:674.7px;height:1.1px;background:#c9a8e6"></div>
<div style="left:204px;top:612px;width:675.3px;height:174px;overflow:hidden">
<div style="left:0.3px;top:0.8px;width:672.5px;height:180px;border:1px solid #cfcfcf;background:#fff"></div>
<span class="t" style="left:43.69999999999999px;top:8.00px;font-size:16px;line-height:16px;color:#444;transform:scaleX(0.9498);">Date</span>
<svg style="left:123.05000000000001px;top:13.299999999999955px;" width="7.5" height="4" viewBox="0 0 7.5 4"><path d="M0 0H7.5L3.75 4Z" fill="#333"/></svg>
<span class="t" style="left:143.39999999999998px;top:8.00px;font-size:16px;line-height:16px;color:#444;transform:scaleX(0.9909);">Description</span>
<div style="left:38.19999999999999px;top:1.8px;width:1px;height:178.2px;background:#c9d3e3"></div>
<div style="left:138.2px;top:1.8px;width:1px;height:178.2px;background:#c9d3e3"></div>
<div style="left:657px;top:1.8px;width:1px;height:25.5px;background:#d0d0d0"></div>
<div style="left:1.3px;top:27.299999999999955px;width:671.7px;height:1px;background:#cfcfcf"></div>
<div style="left:1.3px;top:28px;width:655.7px;height:26.7px;background:#507bb0"></div>
<div style="left:2px;top:29.299999999999955px;width:25.6px;height:23.2px;border:1px solid #2a2a2a;background:#dde3ee"></div>
<span class="t" style="left:43.69999999999999px;top:35.00px;font-size:16px;line-height:16px;color:#fff;transform:scaleX(1.0072);">5/23/2024</span>
<span class="t" style="left:143.39999999999998px;top:35.00px;font-size:16px;line-height:16px;color:#fff;transform:scaleX(0.9934);">Antibody; mycoplasma</span>
<div style="left:1.3px;top:83.2px;width:655.7px;height:1px;background:#dcdcdc"></div>
<div style="left:2px;top:57.299999999999955px;width:25.6px;height:23.2px;border:1px solid #2a2a2a;background:#fff"></div>
<span class="t" style="left:43.69999999999999px;top:63.00px;font-size:16px;line-height:16px;color:#444;transform:scaleX(1.0072);">5/23/2024</span>
<span class="t" style="left:143.39999999999998px;top:63.00px;font-size:16px;line-height:16px;color:#444;transform:scaleX(0.9882);">2019-ncov coronavirus, sars-cov-2/2019-ncov (covid-19), any techniqu...</span>
<div style="left:1.3px;top:111.2px;width:655.7px;height:1px;background:#dcdcdc"></div>
<div style="left:2px;top:85.29999999999995px;width:25.6px;height:23.2px;border:1px solid #2a2a2a;background:#fff"></div>
<span class="t" style="left:43.69999999999999px;top:91.00px;font-size:16px;line-height:16px;color:#444;transform:scaleX(1.0072);">5/23/2024</span>
<span class="t" style="left:143.39999999999998px;top:91.00px;font-size:16px;line-height:16px;color:#444;transform:scaleX(0.9946);">Antibody; influenza virus</span>
<div style="left:1.3px;top:139.2px;width:655.7px;height:1px;background:#dcdcdc"></div>
<div style="left:2px;top:113.29999999999995px;width:25.6px;height:23.2px;border:1px solid #2a2a2a;background:#fff"></div>
<span class="t" style="left:43.69999999999999px;top:119.00px;font-size:16px;line-height:16px;color:#444;transform:scaleX(1.0072);">12/5/2023</span>
<span class="t" style="left:143.39999999999998px;top:119.00px;font-size:16px;line-height:16px;color:#444;transform:scaleX(0.9662);">Blood count; complete (CBC), automated (Hgb, Hct, RBC, WBC and pla...</span>
<div style="left:1.3px;top:167.2px;width:655.7px;height:1px;background:#dcdcdc"></div>
<div style="left:2px;top:141.29999999999995px;width:25.6px;height:23.2px;border:1px solid #2a2a2a;background:#fff"></div>
<span class="t" style="left:43.69999999999999px;top:147.00px;font-size:16px;line-height:16px;color:#444;transform:scaleX(1.0072);">10/2/2023</span>
<span class="t" style="left:143.39999999999998px;top:147.00px;font-size:16px;line-height:16px;color:#444;transform:scaleX(1.0026);">Albumin; urine (eg, microalbumin), quantitative</span>
<div style="left:1.3px;top:195.2px;width:655.7px;height:1px;background:#dcdcdc"></div>
<div style="left:2px;top:169.29999999999995px;width:25.6px;height:23.2px;border:1px solid #2a2a2a;background:#fff"></div>
<span class="t" style="left:43.69999999999999px;top:175.00px;font-size:16px;line-height:16px;color:#444;transform:scaleX(1.0072);">9/12/2023</span>
<span class="t" style="left:143.39999999999998px;top:175.00px;font-size:16px;line-height:16px;color:#444;transform:scaleX(1.0671);">Lipid panel</span>
<div style="left:657.5px;top:28px;width:16px;height:150px;background:#fbfbfb"></div>
<div style="left:658.8px;top:30px;width:10.8px;height:11.2px;border:1px solid #dadada;background:#fff"></div>
<svg style="left:661.1999999999999px;top:34.35px;" width="8" height="4.5" viewBox="0 0 8 4.5"><path d="M0 4.5H8L4.0 0Z" fill="#333"/></svg>
<div style="left:658.8px;top:43px;width:10.8px;height:46px;border:1px solid #c9c9c9;background:#fff"></div>
</div>
<div style="left:905px;top:70px;width:699.9px;height:447.5px;border:1px solid #b9b9b9;background:#fff"></div>
<span class="t" style="left:914.2px;top:80.00px;font-size:16px;line-height:16px;color:#9a9a9a;transform:scaleX(0.9653);">Clinical Evaluation</span>
<svg style="left:1562px;top:82.8px;" width="8" height="9" viewBox="0 0 8 9"><path d="M1.5 0.5H6.5M2.3 0.5V4.2M5.7 0.5V4.2M0.5 4.7H7.5M4 4.7V7.6" stroke="#444" stroke-width="1.1" fill="none"/><rect x="2.3" y="0.5" width="3.4" height="4" fill="#666"/></svg>
<svg style="left:1585.3px;top:82.5px;" width="8.4" height="8.4" viewBox="0 0 8.4 8.4"><path d="M0.5 0.5L7.9 7.9M7.9 0.5L0.5 7.9" stroke="#333" stroke-width="1.2"/></svg>
<span class="t" style="left:923.4px;top:119.00px;font-size:20px;line-height:20px;color:#0c0c0c;transform:scaleX(0.9981);-webkit-text-stroke:0.7px #0c0c0c;">Progress Note</span>
<div style="left:923px;top:137.4px;width:133.8px;height:1.7px;background:#111"></div>
<svg style="left:1058.4px;top:120px;" width="16" height="16" viewBox="0 0 16 16"><circle cx="8" cy="8" r="7.6" fill="#f0506e"/><path d="M5 5L11 11M11 5L5 11" stroke="#fff" stroke-width="2.2" stroke-linecap="round"/></svg>
<span class="t" style="left:1220.4px;top:123.00px;font-size:12px;line-height:12px;color:#333;transform:scaleX(0.9691);-webkit-text-stroke:0.4px #333;">Date:</span>
<div style="left:1255.4px;top:113.2px;width:119px;height:28.3px;border:1px solid #c6c6c6;background:#fff"></div>
<span class="t" style="left:1261px;top:121.00px;font-size:18px;line-height:18px;color:#3c3c3c;transform:scaleX(1.0115);">9/18/2024</span>
<svg style="left:1360.3px;top:120.8px;" width="13" height="13.5" viewBox="0 0 13 13.5"><rect x="0.6" y="2" width="11.6" height="10.6" fill="none" stroke="#555" stroke-width="1.1"/><path d="M0.6 5H12.2M3.4 0V3M9.4 0V3" stroke="#555" stroke-width="1.1"/><rect x="2.6" y="6.8" width="2.6" height="2.2" fill="none" stroke="#555" stroke-width=".9"/></svg>
<span class="t" style="left:1382.9px;top:138.00px;font-size:12px;line-height:12px;color:#7a7a7a;transform:scaleX(0.9239);">Follow Up</span>
<span class="t" style="left:1442.8px;top:138.00px;font-size:12px;line-height:12px;color:#7a7a7a;transform:scaleX(0.8934);">Load Last</span>
<span class="t" style="left:1500.7px;top:138.00px;font-size:12px;line-height:12px;color:#7a7a7a;transform:scaleX(0.8921);">Templates</span>
<span class="t" style="left:1560.3px;top:138.00px;font-size:12px;line-height:12px;color:#7a7a7a;transform:scaleX(0.8630);">Save As</span>
<svg style="left:1392.5px;top:104.6px;" width="30" height="30" viewBox="0 0 30 30"><circle cx="15" cy="15" r="15" fill="#fdc94c"/><path d="M9 19.5L20.5 9L29.7 18A15 15 0 0 1 19 29.5Z" fill="#f2a838"/>
<path d="M9.3 11.7H21.3M9.3 11.7L12.8 8.4M9.3 11.7L12.8 15" stroke="#2f3a4a" stroke-width="2.1" fill="none"/><path d="M20.7 18.3H8.7M20.7 18.3L17.2 15M20.7 18.3L17.2 21.6" stroke="#2f3a4a" stroke-width="2.1" fill="none"/></svg>
<svg style="left:1451.3px;top:104.6px;" width="30" height="30" viewBox="0 0 30 30"><circle cx="15" cy="15" r="15" fill="#0f4c75"/><path d="M22 7L29.8 13A15 15 0 0 1 17 29.8L9 24Z" fill="#0a2f4a"/>
<rect x="9" y="6.5" width="14" height="17.5" fill="#ee5a2e"/><rect x="15.8" y="6.5" width="7.2" height="17.5" fill="#a8432c"/>
<g fill="#fbb83a"><rect x="10.5" y="8.5" width="5.5" height="1.4"/><rect x="10.5" y="11" width="5.5" height="1.4"/><rect x="17.5" y="8.5" width="4" height="2"/><rect x="19.5" y="13.5" width="2.5" height="2.5"/></g>
<path d="M12.4 14.5V23M12.4 24.5L8 19.8M12.4 24.5L16.8 19.8" stroke="#f4f4f4" stroke-width="2.3" fill="none"/></svg>
<svg style="left:1510.1px;top:104.6px;" width="30" height="30" viewBox="0 0 30 30"><circle cx="15" cy="15" r="15" fill="#f58a73"/>
<rect x="7.5" y="6" width="15" height="19.5" rx="1" fill="#2f3f54"/><rect x="9.2" y="8" width="11.6" height="16" fill="#f4fbff"/>
<rect x="12" y="4.6" width="6" height="3" rx="1" fill="#f2b84a"/>
<g fill="#a9dcf7"><rect x="10.6" y="10.5" width="8.8" height="1"/><rect x="10.6" y="13" width="8.8" height="1"/><rect x="10.6" y="15.5" width="8.8" height="1"/><rect x="10.6" y="18" width="8.8" height="1"/><rect x="10.6" y="20.5" width="5.8" height="1"/></g></svg>
<svg style="left:1564.3px;top:104.6px;" width="30" height="30" viewBox="0 0 30 30"><circle cx="15" cy="15" r="15" fill="#f5853a"/><path d="M21.5 8.5L29.6 16A15 15 0 0 1 17.5 29.8L8.5 21.5Z" fill="#e0642a"/>
<path d="M8.5 8.5H19.5L21.5 10.5V21.5H8.5Z" fill="#2e3350"/><rect x="11" y="8.5" width="7.5" height="4.6" fill="#e9eef2"/><rect x="15.7" y="9.3" width="1.7" height="3" fill="#2e3350"/>
<rect x="10.7" y="15.6" width="8.6" height="5.9" fill="#f4f6f8"/></svg>
<div style="left:912.5px;top:155.8px;width:683.6px;height:353.3px;border:1px solid #d6d6d6;background:#fff;overflow:hidden"></div>
<div style="left:1580.5px;top:157px;width:16.4px;height:352px;background:#fbfbfb"></div>
<div style="left:1581.3px;top:158px;width:12.3px;height:12.6px;border:1px solid #dadada;background:#fff"></div>
<svg style="left:1584.45px;top:163.05px;" width="8" height="4.5" viewBox="0 0 8 4.5"><path d="M0 4.5H8L4.0 0Z" fill="#333"/></svg>
<div style="left:1581.3px;top:172px;width:12.3px;height:141.5px;border:1px solid #c9c9c9;background:#fff"></div>
<div style="left:1581.3px;top:493.6px;width:12.3px;height:11.9px;border:1px solid #dadada;background:#fff"></div>
<svg style="left:1584.45px;top:498.3px;" width="8" height="4.5" viewBox="0 0 8 4.5"><path d="M0 0H8L4.0 4.5Z" fill="#333"/></svg>
<svg style="left:921px;top:166.4px;" width="6.3" height="6.3" viewBox="0 0 6.3 6.3"><path d="M6.3 0V6.3H0Z" fill="#3a3a3a"/></svg>
<span class="t" style="left:934px;top:161.00px;font-size:16px;line-height:16px;color:#0a0a0a;text-decoration:underline;transform:scaleX(1.0072);-webkit-text-stroke:0.5px #0a0a0a;">Allergies</span>
<div style="left:934px;top:180.0px;width:597.8px;height:1px;background:#5a87cb"></div>
<div style="left:953.6px;top:203.0px;width:626.7px;height:1px;background:#5a87cb"></div>
<svg style="left:1537.1px;top:162.10000000000002px;" width="14" height="17" viewBox="0 0 14 17"><ellipse cx="3.6" cy="2" rx="2.2" ry="1.3" fill="#8a8a92"/><ellipse cx="10.4" cy="2" rx="2.2" ry="1.3" fill="#8a8a92"/>
<path d="M3.4 14.6L2.8 15.8M10.6 14.6L11.2 15.8" stroke="#888" stroke-width="1"/>
<circle cx="7" cy="9" r="5" fill="#fdfbf7" stroke="#22d060" stroke-width="2.1"/>
<path d="M7 14A5 5 0 0 0 7 4" fill="none" stroke="#5be04a" stroke-width="2.1"/>
<path d="M7 9V6.2M7 9H4.8" stroke="#777" stroke-width=".9"/><path d="M7 9L9.4 11.2" stroke="#f0602e" stroke-width="1"/></svg>
<svg style="left:1557.8px;top:159.60000000000002px;" width="20.4" height="20.4" viewBox="0 0 20.4 20.4"><defs><clipPath id="pc1"><circle cx="10.2" cy="10.2" r="10.2"/></clipPath></defs>
<g clip-path="url(#pc1)"><rect width="20.4" height="20.4" fill="#3fae5a"/><rect width="20.4" height="10.1" fill="#129a72"/></g>
<path d="M10.2 4.2V16.2M4.2 10.2H16.2" stroke="#e8f7ee" stroke-width="3.6"/><path d="M4.2 11.1H16.2M10.2 10.6V16.2" stroke="#c4e8cf" stroke-width="1.8" opacity=".8"/></svg>
<svg style="left:921px;top:215.9px;" width="6.3" height="6.3" viewBox="0 0 6.3 6.3"><path d="M6.3 0V6.3H0Z" fill="#3a3a3a"/></svg>
<span class="t" style="left:934px;top:210.50px;font-size:16px;line-height:16px;color:#303030;text-decoration:underline;transform:scaleX(1.0500);-webkit-text-stroke:0.5px #303030;text-decoration-color:#7d7d7d;">Comportamiento</span>
<div style="left:934px;top:229px;width:597.8px;height:2px;background:#abc2e8"></div>
<div style="left:953.6px;top:252px;width:626.7px;height:2px;background:#abc2e8"></div>
<svg style="left:1537.1px;top:211.60000000000002px;" width="14" height="17" viewBox="0 0 14 17"><ellipse cx="3.6" cy="2" rx="2.2" ry="1.3" fill="#8a8a92"/><ellipse cx="10.4" cy="2" rx="2.2" ry="1.3" fill="#8a8a92"/>
<path d="M3.4 14.6L2.8 15.8M10.6 14.6L11.2 15.8" stroke="#888" stroke-width="1"/>
<circle cx="7" cy="9" r="5" fill="#fdfbf7" stroke="#22d060" stroke-width="2.1"/>
<path d="M7 14A5 5 0 0 0 7 4" fill="none" stroke="#5be04a" stroke-width="2.1"/>
<path d="M7 9V6.2M7 9H4.8" stroke="#777" stroke-width=".9"/><path d="M7 9L9.4 11.2" stroke="#f0602e" stroke-width="1"/></svg>
<svg style="left:1557.8px;top:209.10000000000002px;" width="20.4" height="20.4" viewBox="0 0 20.4 20.4"><defs><clipPath id="pc2"><circle cx="10.2" cy="10.2" r="10.2"/></clipPath></defs>
<g clip-path="url(#pc2)"><rect width="20.4" height="20.4" fill="#3fae5a"/><rect width="20.4" height="10.1" fill="#129a72"/></g>
<path d="M10.2 4.2V16.2M4.2 10.2H16.2" stroke="#e8f7ee" stroke-width="3.6"/><path d="M4.2 11.1H16.2M10.2 10.6V16.2" stroke="#c4e8cf" stroke-width="1.8" opacity=".8"/></svg>
<svg style="left:921px;top:265.4px;" width="6.3" height="6.3" viewBox="0 0 6.3 6.3"><path d="M6.3 0V6.3H0Z" fill="#3a3a3a"/></svg>
<span class="t" style="left:934px;top:260.00px;font-size:16px;line-height:16px;color:#303030;text-decoration:underline;transform:scaleX(0.9898);-webkit-text-stroke:0.5px #303030;text-decoration-color:#7d7d7d;">Instrucciones</span>
<div style="left:934px;top:279.0px;width:597.8px;height:1px;background:#5a87cb"></div>
<div style="left:953.6px;top:302.0px;width:626.7px;height:1px;background:#5a87cb"></div>
<svg style="left:1537.1px;top:261.1px;" width="14" height="17" viewBox="0 0 14 17"><ellipse cx="3.6" cy="2" rx="2.2" ry="1.3" fill="#8a8a92"/><ellipse cx="10.4" cy="2" rx="2.2" ry="1.3" fill="#8a8a92"/>
<path d="M3.4 14.6L2.8 15.8M10.6 14.6L11.2 15.8" stroke="#888" stroke-width="1"/>
<circle cx="7" cy="9" r="5" fill="#fdfbf7" stroke="#22d060" stroke-width="2.1"/>
<path d="M7 14A5 5 0 0 0 7 4" fill="none" stroke="#5be04a" stroke-width="2.1"/>
<path d="M7 9V6.2M7 9H4.8" stroke="#777" stroke-width=".9"/><path d="M7 9L9.4 11.2" stroke="#f0602e" stroke-width="1"/></svg>
<svg style="left:1557.8px;top:258.6px;" width="20.4" height="20.4" viewBox="0 0 20.4 20.4"><defs><clipPath id="pc3"><circle cx="10.2" cy="10.2" r="10.2"/></clipPath></defs>
<g clip-path="url(#pc3)"><rect width="20.4" height="20.4" fill="#3fae5a"/><rect width="20.4" height="10.1" fill="#129a72"/></g>
<path d="M10.2 4.2V16.2M4.2 10.2H16.2" stroke="#e8f7ee" stroke-width="3.6"/><path d="M4.2 11.1H16.2M10.2 10.6V16.2" stroke="#c4e8cf" stroke-width="1.8" opacity=".8"/></svg>
<svg style="left:921px;top:314.9px;" width="6.3" height="6.3" viewBox="0 0 6.3 6.3"><path d="M6.3 0V6.3H0Z" fill="#3a3a3a"/></svg>
<span class="t" style="left:934px;top:309.50px;font-size:16px;line-height:16px;color:#303030;text-decoration:underline;transform:scaleX(0.9901);-webkit-text-stroke:0.5px #303030;text-decoration-color:#7d7d7d;">Evaluación de Gabriel</span>
<div style="left:934px;top:328px;width:597.8px;height:2px;background:#abc2e8"></div>
<div style="left:953.6px;top:351px;width:626.7px;height:2px;background:#abc2e8"></div>
<svg style="left:1537.1px;top:310.6px;" width="14" height="17" viewBox="0 0 14 17"><ellipse cx="3.6" cy="2" rx="2.2" ry="1.3" fill="#8a8a92"/><ellipse cx="10.4" cy="2" rx="2.2" ry="1.3" fill="#8a8a92"/>
<path d="M3.4 14.6L2.8 15.8M10.6 14.6L11.2 15.8" stroke="#888" stroke-width="1"/>
<circle cx="7" cy="9" r="5" fill="#fdfbf7" stroke="#22d060" stroke-width="2.1"/>
<path d="M7 14A5 5 0 0 0 7 4" fill="none" stroke="#5be04a" stroke-width="2.1"/>
<path d="M7 9V6.2M7 9H4.8" stroke="#777" stroke-width=".9"/><path d="M7 9L9.4 11.2" stroke="#f0602e" stroke-width="1"/></svg>
<svg style="left:1557.8px;top:308.1px;" width="20.4" height="20.4" viewBox="0 0 20.4 20.4"><defs><clipPath id="pc4"><circle cx="10.2" cy="10.2" r="10.2"/></clipPath></defs>
<g clip-path="url(#pc4)"><rect width="20.4" height="20.4" fill="#3fae5a"/><rect width="20.4" height="10.1" fill="#129a72"/></g>
<path d="M10.2 4.2V16.2M4.2 10.2H16.2" stroke="#e8f7ee" stroke-width="3.6"/><path d="M4.2 11.1H16.2M10.2 10.6V16.2" stroke="#c4e8cf" stroke-width="1.8" opacity=".8"/></svg>
<svg style="left:921px;top:364.4px;" width="6.3" height="6.3" viewBox="0 0 6.3 6.3"><path d="M6.3 0V6.3H0Z" fill="#3a3a3a"/></svg>
<span class="t" style="left:934px;top:359.00px;font-size:16px;line-height:16px;color:#303030;text-decoration:underline;transform:scaleX(1.0235);-webkit-text-stroke:0.5px #303030;text-decoration-color:#7d7d7d;">Chief Complaint</span>
<div style="left:934px;top:378.0px;width:597.8px;height:1px;background:#5a87cb"></div>
<div style="left:953.6px;top:401.0px;width:626.7px;height:1px;background:#5a87cb"></div>
<svg style="left:1537.1px;top:360.1px;" width="14" height="17" viewBox="0 0 14 17"><ellipse cx="3.6" cy="2" rx="2.2" ry="1.3" fill="#8a8a92"/><ellipse cx="10.4" cy="2" rx="2.2" ry="1.3" fill="#8a8a92"/>
<path d="M3.4 14.6L2.8 15.8M10.6 14.6L11.2 15.8" stroke="#888" stroke-width="1"/>
<circle cx="7" cy="9" r="5" fill="#fdfbf7" stroke="#22d060" stroke-width="2.1"/>
<path d="M7 14A5 5 0 0 0 7 4" fill="none" stroke="#5be04a" stroke-width="2.1"/>
<path d="M7 9V6.2M7 9H4.8" stroke="#777" stroke-width=".9"/><path d="M7 9L9.4 11.2" stroke="#f0602e" stroke-width="1"/></svg>
<svg style="left:1557.8px;top:357.6px;" width="20.4" height="20.4" viewBox="0 0 20.4 20.4"><defs><clipPath id="pc5"><circle cx="10.2" cy="10.2" r="10.2"/></clipPath></defs>
<g clip-path="url(#pc5)"><rect width="20.4" height="20.4" fill="#3fae5a"/><rect width="20.4" height="10.1" fill="#129a72"/></g>
<path d="M10.2 4.2V16.2M4.2 10.2H16.2" stroke="#e8f7ee" stroke-width="3.6"/><path d="M4.2 11.1H16.2M10.2 10.6V16.2" stroke="#c4e8cf" stroke-width="1.8" opacity=".8"/></svg>
<svg style="left:921px;top:413.9px;" width="6.3" height="6.3" viewBox="0 0 6.3 6.3"><path d="M6.3 0V6.3H0Z" fill="#3a3a3a"/></svg>
<span class="t" style="left:934px;top:408.50px;font-size:16px;line-height:16px;color:#303030;text-decoration:underline;transform:scaleX(0.9768);-webkit-text-stroke:0.5px #303030;text-decoration-color:#7d7d7d;">Present Illness</span>
<div style="left:934px;top:427px;width:597.8px;height:2px;background:#abc2e8"></div>
<div style="left:953.6px;top:450px;width:626.7px;height:2px;background:#abc2e8"></div>
<svg style="left:1537.1px;top:409.6px;" width="14" height="17" viewBox="0 0 14 17"><ellipse cx="3.6" cy="2" rx="2.2" ry="1.3" fill="#8a8a92"/><ellipse cx="10.4" cy="2" rx="2.2" ry="1.3" fill="#8a8a92"/>
<path d="M3.4 14.6L2.8 15.8M10.6 14.6L11.2 15.8" stroke="#888" stroke-width="1"/>
<circle cx="7" cy="9" r="5" fill="#fdfbf7" stroke="#22d060" stroke-width="2.1"/>
<path d="M7 14A5 5 0 0 0 7 4" fill="none" stroke="#5be04a" stroke-width="2.1"/>
<path d="M7 9V6.2M7 9H4.8" stroke="#777" stroke-width=".9"/><path d="M7 9L9.4 11.2" stroke="#f0602e" stroke-width="1"/></svg>
<svg style="left:1557.8px;top:407.1px;" width="20.4" height="20.4" viewBox="0 0 20.4 20.4"><defs><clipPath id="pc6"><circle cx="10.2" cy="10.2" r="10.2"/></clipPath></defs>
<g clip-path="url(#pc6)"><rect width="20.4" height="20.4" fill="#3fae5a"/><rect width="20.4" height="10.1" fill="#129a72"/></g>
<path d="M10.2 4.2V16.2M4.2 10.2H16.2" stroke="#e8f7ee" stroke-width="3.6"/><path d="M4.2 11.1H16.2M10.2 10.6V16.2" stroke="#c4e8cf" stroke-width="1.8" opacity=".8"/></svg>
<svg style="left:921px;top:463.4px;" width="6.3" height="6.3" viewBox="0 0 6.3 6.3"><path d="M6.3 0V6.3H0Z" fill="#3a3a3a"/></svg>
<span class="t" style="left:934px;top:458.00px;font-size:16px;line-height:16px;color:#303030;text-decoration:underline;transform:scaleX(0.9818);-webkit-text-stroke:0.5px #303030;text-decoration-color:#7d7d7d;">Review of Systrems</span>
<div style="left:934px;top:477.0px;width:597.8px;height:1px;background:#5a87cb"></div>
<div style="left:953.6px;top:500.0px;width:626.7px;height:1px;background:#5a87cb"></div>
<svg style="left:1537.1px;top:459.1px;" width="14" height="17" viewBox="0 0 14 17"><ellipse cx="3.6" cy="2" rx="2.2" ry="1.3" fill="#8a8a92"/><ellipse cx="10.4" cy="2" rx="2.2" ry="1.3" fill="#8a8a92"/>
<path d="M3.4 14.6L2.8 15.8M10.6 14.6L11.2 15.8" stroke="#888" stroke-width="1"/>
<circle cx="7" cy="9" r="5" fill="#fdfbf7" stroke="#22d060" stroke-width="2.1"/>
<path d="M7 14A5 5 0 0 0 7 4" fill="none" stroke="#5be04a" stroke-width="2.1"/>
<path d="M7 9V6.2M7 9H4.8" stroke="#777" stroke-width=".9"/><path d="M7 9L9.4 11.2" stroke="#f0602e" stroke-width="1"/></svg>
<svg style="left:1557.8px;top:456.6px;" width="20.4" height="20.4" viewBox="0 0 20.4 20.4"><defs><clipPath id="pc7"><circle cx="10.2" cy="10.2" r="10.2"/></clipPath></defs>
<g clip-path="url(#pc7)"><rect width="20.4" height="20.4" fill="#3fae5a"/><rect width="20.4" height="10.1" fill="#129a72"/></g>
<path d="M10.2 4.2V16.2M4.2 10.2H16.2" stroke="#e8f7ee" stroke-width="3.6"/><path d="M4.2 11.1H16.2M10.2 10.6V16.2" stroke="#c4e8cf" stroke-width="1.8" opacity=".8"/></svg>
<svg style="left:1557.8px;top:507px;" width="20.4" height="3" viewBox="0 0 20.4 3"><ellipse cx="10.2" cy="10.2" rx="10.2" ry="10.2" fill="#12996e"/></svg>
<div style="left:913.5px;top:509.4px;width:683.5px;height:1px;background:#cdcdcd"></div>
<div style="left:1630px;top:76.8px;width:0;height:0;transform:rotate(90deg);transform-origin:0 0">
<span class="t" style="left:0px;top:0.00px;font-size:15.5px;line-height:15.5px;color:#444;transform:scaleX(0.8693);">Smart Box</span>
</div>
<div style="left:1630px;top:153.2px;width:0;height:0;transform:rotate(90deg);transform-origin:0 0">
<span class="t" style="left:0px;top:0.00px;font-size:15.5px;line-height:15.5px;color:#111;transform:scaleX(0.8900);">Clinical Alerts</span>
</div>
<div style="left:1630px;top:248.6px;width:0;height:0;transform:rotate(90deg);transform-origin:0 0">
<span class="t" style="left:0px;top:0.00px;font-size:15.5px;line-height:15.5px;color:#444;transform:scaleX(0.8715);">Tele Medicine</span>
</div>
<div style="left:905px;top:523.2px;width:699.9px;height:261.6px;border:1px solid #b9b9b9;background:#fff"></div>
<span class="t" style="left:914.4px;top:534.00px;font-size:16px;line-height:16px;color:#9a9a9a;transform:scaleX(0.9525);">Assessment / Plan</span>
<svg style="left:1562px;top:535.8px;" width="8" height="9" viewBox="0 0 8 9"><path d="M1.5 0.5H6.5M2.3 0.5V4.2M5.7 0.5V4.2M0.5 4.7H7.5M4 4.7V7.6" stroke="#444" stroke-width="1.1" fill="none"/><rect x="2.3" y="0.5" width="3.4" height="4" fill="#666"/></svg>
<svg style="left:1585.7px;top:535.5px;" width="8.4" height="8.4" viewBox="0 0 8.4 8.4"><path d="M0.5 0.5L7.9 7.9M7.9 0.5L0.5 7.9" stroke="#333" stroke-width="1.2"/></svg>
<span class="t" style="left:908.3px;top:566.00px;font-size:15px;line-height:15px;color:#3a3a3a;transform:scaleX(0.8751);">Assessment</span>
<span class="t" style="left:1503.6px;top:564.00px;font-size:13px;line-height:13px;color:#3a3a3a;transform:scaleX(0.9320);">Note</span>
<div style="left:1535.3px;top:558px;width:31.4px;height:21.7px;border:1px solid #c4c4c4;background:#fff"></div>
<svg style="left:1536.5px;top:563.8px;" width="15.5" height="12" viewBox="0 0 15.5 12"><path d="M0.5 0.5H11L14.8 4V11.5H0.5Z" fill="#fdfdfd" stroke="#a0a0a0" stroke-width=".9"/><path d="M11 0.5V4H14.8" fill="none" stroke="#b0b0b0" stroke-width=".9"/></svg>
<span class="t" style="left:1538.1px;top:565.00px;font-size:12px;line-height:12px;color:#a8a8a8;font-weight:700;font-family:'Liberation Serif',sans-serif;">A</span>
<svg style="left:1556.55px;top:567.9px;" width="7.5" height="4.2" viewBox="0 0 7.5 4.2"><path d="M0 0H7.5L3.75 4.2Z" fill="#333"/></svg>
<svg style="left:1580.8px;top:558.8px;" width="22" height="22" viewBox="0 0 22 22"><path d="M11 2.2A9.3 9.3 0 0 1 20.3 11.5A9.3 9.3 0 0 1 19.3 15.5" stroke="#1ea7e8" stroke-width="1.5" fill="none"/>
<path d="M11 2.2Q7 2.4 4.4 5" stroke="#1ea7e8" stroke-width="1.5" fill="none"/>
<path d="M2.4 2.4L3.3 6.4L7.3 5.8" stroke="#1ea7e8" stroke-width="1.5" fill="none"/>
<path d="M19.3 15.5A9.3 9.3 0 0 1 11 20.8A9.3 9.3 0 0 1 1.7 11.5Q1.7 9.5 2.5 8" stroke="#1ea7e8" stroke-width="1.6" stroke-dasharray="1.3 1.7" fill="none"/></svg>
<div style="left:906px;top:585.6px;width:700px;height:1.2px;background:#5b86c9"></div>
<div style="left:908px;top:596px;width:694.4px;height:70.8px;border:1px solid #a4a9b0;background:#fff"></div>
<span class="t" style="left:914.2px;top:599.00px;font-size:12.5px;line-height:12.5px;color:#0a0a0a;transform:scaleX(0.9995);">Male patient of 29 year(s) of age Viene por molestia     Allergies last reviewed by Gabirle J Ortiz Nieves on 9/17/2024</span>
<span class="t" style="left:914.2px;top:613.00px;font-size:12.5px;line-height:12.5px;color:#0a0a0a;transform:scaleX(0.9991);">4:53:02 PM.    Items found were:  Crustacean  Items found were:  U071 Covid-19, J45991 Cough variant asthma, R059</span>
<span class="t" style="left:914.2px;top:627.00px;font-size:12.5px;line-height:12.5px;color:#0a0a0a;transform:scaleX(0.9991);">Cough, unspecified, M6281 Muscle weakness (generalized), Z23 Encounter for immunization, R05 Cough, Z85040</span>
<span class="t" style="left:914.2px;top:641.00px;font-size:12.5px;line-height:12.5px;color:#0a0a0a;transform:scaleX(0.9988);">Personal history of malignant carcinoid tumor of rectum, Z789 Other specified health status, E119 Type 2 diabetes</span>
<span class="t" style="left:914.2px;top:655.00px;font-size:12.5px;line-height:12.5px;color:#0a0a0a;transform:scaleX(0.9991);">mellitus without complications, E291 Testicular hypofunction, H9041 Sensorineural hearing loss, unilateral, right ear, with</span>
<div style="left:1586px;top:597.6px;width:16.8px;height:69.6px;background:#f7f7f7"></div>
<div style="left:1587.6px;top:598.4px;width:12px;height:12.2px;border:1px solid #dadada;background:#fff"></div>
<svg style="left:1590.6px;top:603.25px;" width="8" height="4.5" viewBox="0 0 8 4.5"><path d="M0 4.5H8L4.0 0Z" fill="#333"/></svg>
<div style="left:1587.6px;top:612.4px;width:12px;height:17px;border:1px solid #c9c9c9;background:#fff"></div>
<div style="left:1587.6px;top:652.5px;width:12px;height:12px;border:1px solid #dadada;background:#fff"></div>
<svg style="left:1590.6px;top:657.25px;" width="8" height="4.5" viewBox="0 0 8 4.5"><path d="M0 0H8L4.0 4.5Z" fill="#333"/></svg>
<span class="t" style="left:908.4px;top:681.00px;font-size:15px;line-height:15px;color:#555;transform:scaleX(0.8425);">Plan</span>
<span class="t" style="left:1509.8px;top:679.00px;font-size:13px;line-height:13px;color:#3a3a3a;transform:scaleX(0.9283);">Note</span>
<div style="left:1541.2px;top:673px;width:31.4px;height:21.7px;border:1px solid #c4c4c4;background:#fff"></div>
<svg style="left:1542.4px;top:678.8px;" width="15.5" height="12" viewBox="0 0 15.5 12"><path d="M0.5 0.5H11L14.8 4V11.5H0.5Z" fill="#fdfdfd" stroke="#a0a0a0" stroke-width=".9"/><path d="M11 0.5V4H14.8" fill="none" stroke="#b0b0b0" stroke-width=".9"/></svg>
<span class="t" style="left:1544.0px;top:680.00px;font-size:12px;line-height:12px;color:#a8a8a8;font-weight:700;font-family:'Liberation Serif',sans-serif;">A</span>
<svg style="left:1562.45px;top:682.9px;" width="7.5" height="4.2" viewBox="0 0 7.5 4.2"><path d="M0 0H7.5L3.75 4.2Z" fill="#333"/></svg>
<svg style="left:1580.7px;top:673.7px;" width="22" height="22" viewBox="0 0 22 22"><path d="M11 2.2A9.3 9.3 0 0 1 20.3 11.5A9.3 9.3 0 0 1 19.3 15.5" stroke="#1ea7e8" stroke-width="1.5" fill="none"/>
<path d="M11 2.2Q7 2.4 4.4 5" stroke="#1ea7e8" stroke-width="1.5" fill="none"/>
<path d="M2.4 2.4L3.3 6.4L7.3 5.8" stroke="#1ea7e8" stroke-width="1.5" fill="none"/>
<path d="M19.3 15.5A9.3 9.3 0 0 1 11 20.8A9.3 9.3 0 0 1 1.7 11.5Q1.7 9.5 2.5 8" stroke="#1ea7e8" stroke-width="1.6" stroke-dasharray="1.3 1.7" fill="none"/></svg>
<div style="left:906px;top:701px;width:700px;height:1.2px;background:#5b86c9"></div>
<div style="left:908px;top:711.3px;width:694.4px;height:71px;border:1px solid #a4a9b0;background:#fff"></div>
</div></body></html>
